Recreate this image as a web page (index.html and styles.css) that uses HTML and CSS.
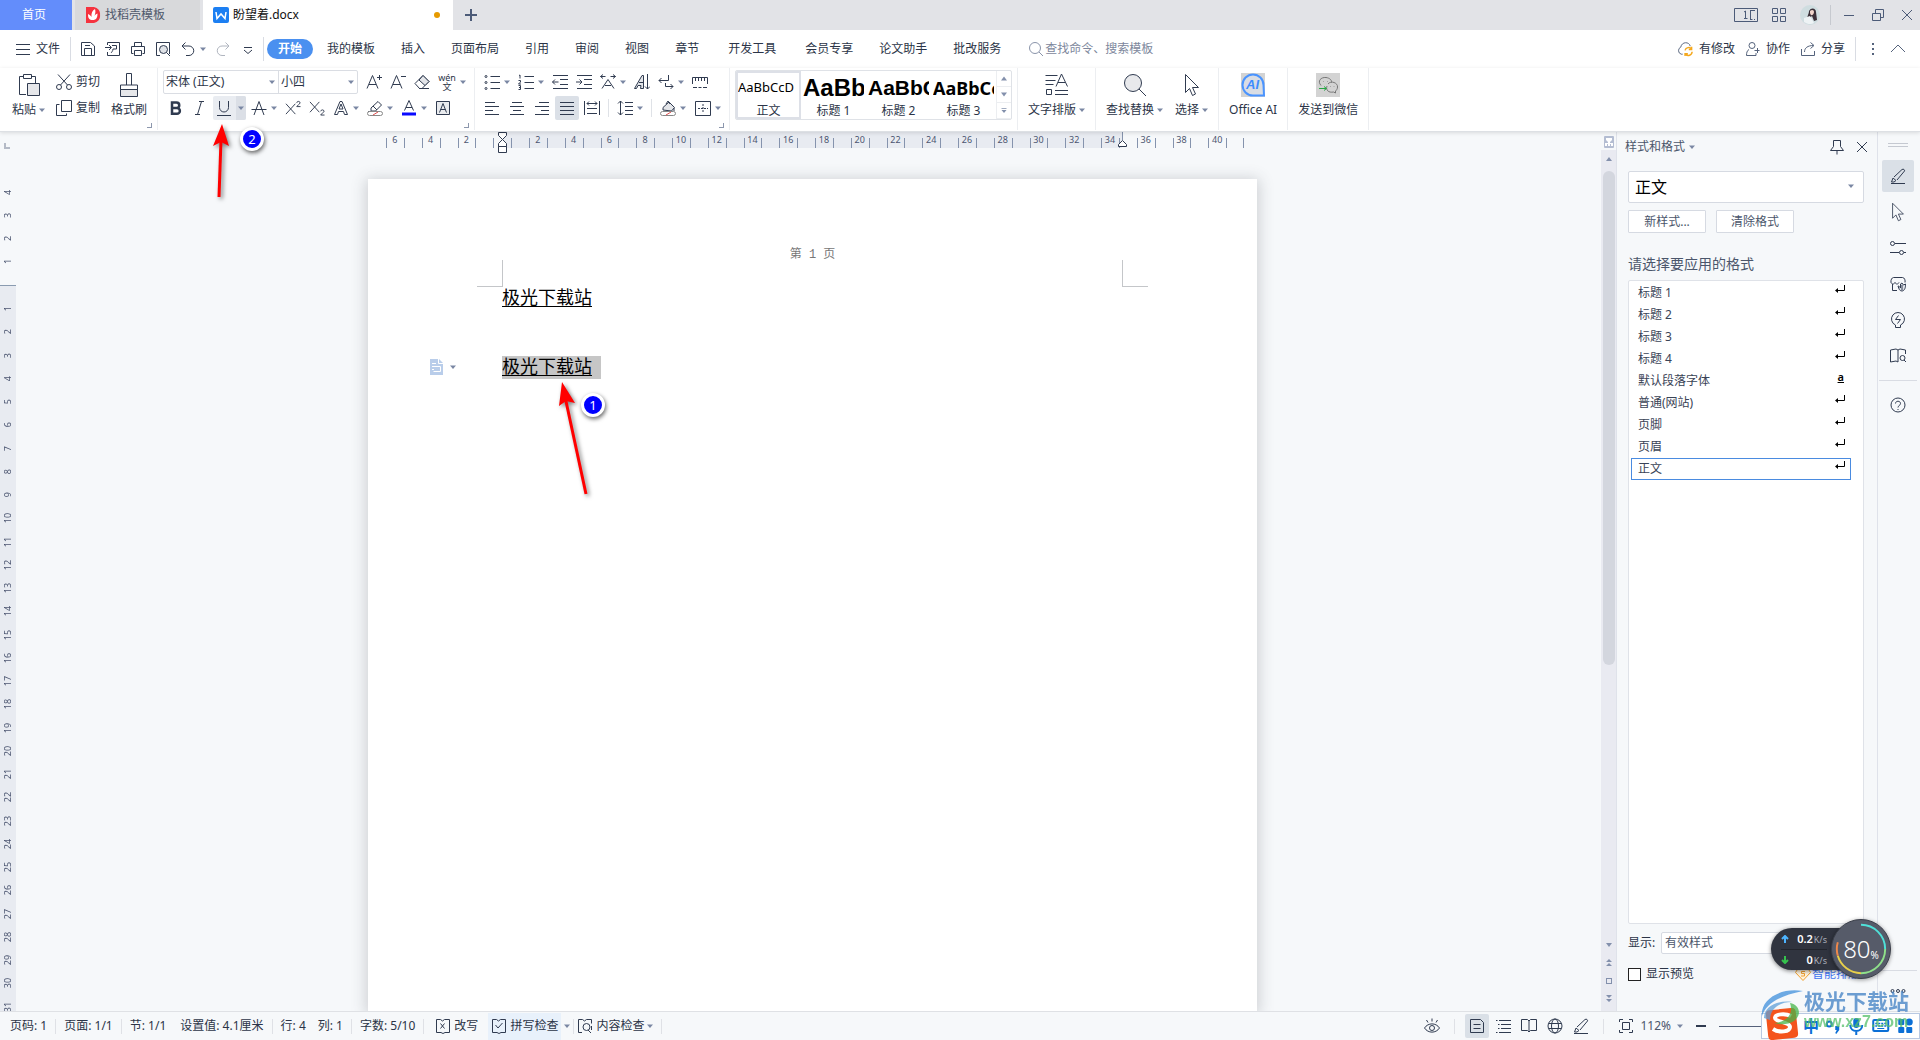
FILE: index.html
```html
<!DOCTYPE html>
<html lang="zh-CN">
<head>
<meta charset="utf-8">
<title>盼望着.docx</title>
<link rel="stylesheet" href="styles.css">
</head>
<body>
<svg class="sprite" aria-hidden="true">
  <symbol id="caret" viewBox="0 0 6 16"><path d="M0 6.500h6l-3 3.500z" fill="#7a87a3" stroke="none"/></symbol>
  <symbol id="menu" viewBox="0 0 16 16"><path d="M1 3.500h14M1 8.500h14M1 13.500h14"/></symbol>
  <symbol id="save" viewBox="0 0 16 16"><path d="M1.500 14.500v-13h9l4 3.500v9.500h-13M4.500 14v-6.500h7v6.500M5 4.500h5"/></symbol>
  <symbol id="export" viewBox="0 0 16 16"><path d="M2.500 4V1.500h12v13h-12V11M0 6.500h6M4 4l2.500 2.500L4 9M7 4.500h4.500v3.500h-3.500c0 2-2 4-2 4"/></symbol>
  <symbol id="print" viewBox="0 0 16 16"><path d="M4.500 5V1.500h7V5M3.500 12.500h-2v-7h13v7h-2M4.500 9.500h7v5h-7z"/></symbol>
  <symbol id="preview" viewBox="0 0 16 16"><path d="M5 14.500H1.500v-13h13V13"/><circle cx="8.500" cy="8.500" r="4" fill="#dfe2e7"/><path d="M11.500 11.500L15 15"/></symbol>
  <symbol id="undo" viewBox="0 0 16 16"><path d="M5.500 1.500L2 5l3.500 3.500M2 5h7a4.700 4.700 0 0 1 0 9.500H6"/></symbol>
  <symbol id="redo" viewBox="0 0 16 16"><path stroke="#b0b5bf" d="M10.500 1.500L14 5l-3.500 3.500M14 5H7a4.700 4.700 0 0 0 0 9.500h3"/></symbol>
  <symbol id="more" viewBox="0 0 16 16"><path d="M4 6.500h8M4 9l4 3.500L12 9"/></symbol>
  <symbol id="search" viewBox="0 0 16 16"><circle cx="7" cy="7" r="5.500"/><path d="M11 11l4 4"/></symbol>
  <symbol id="cloud" viewBox="0 0 18 16"><path stroke="#55637c" d="M6 13.500H4.500a4 4 0 0 1-.5-7.500c1-6 9-6 10-1"/><path stroke="#f5a81c" stroke-width="1.500" d="M8.500 9.500a4 4 0 0 1 7-1.500M16 11a4 4 0 0 1-7 2.500M15.500 5.500v3h-3M8.500 15.500v-2.500h3"/></symbol>
  <symbol id="people" viewBox="0 0 16 16"><circle cx="7" cy="4.500" r="3"/><path d="M4 8.500C2 9.500 1.500 12 1.500 14.500h9.500v-2.500M9.500 9.500h5M12.500 7v5"/></symbol>
  <symbol id="share" viewBox="0 0 16 16"><path d="M1.500 8v6.500h13V10M4.500 11c0-4 3-6.500 9-6.500M10.500 1.500l3.500 3-3.500 3"/></symbol>
  <symbol id="chevron" viewBox="0 0 16 16"><path d="M1 11l7-7 7 7"/></symbol>
  <symbol id="dots" viewBox="0 0 4 16"><path stroke-width="2" d="M2 2v2M2 7v2M2 12v2"/></symbol>
  <symbol id="paste" viewBox="0 0 24 24"><path d="M6.500 3.500h-4v18H9M14.500 3.500h4V10M6.500 1.500h8v4h-8z"/><path fill="#e6e7ea" d="M10.500 10.500h12v12h-12z"/></symbol>
  <symbol id="cut" viewBox="0 0 16 16"><circle cx="3" cy="13" r="2.500"/><circle cx="13" cy="13" r="2.500"/><path d="M2 0.500l9.500 10.500M14 0.500L4.500 11"/></symbol>
  <symbol id="copy" viewBox="0 0 16 16"><path d="M5.500 .5h10v11h-10zM3.500 4.500h-3v11h10v-2"/></symbol>
  <symbol id="brush" viewBox="0 0 24 24"><path d="M9.500 12V.5h5V12M3.500 17v-5h17v5"/><path fill="#e6e7ea" d="M3.500 16.500h17v7h-17z"/></symbol>
  <symbol id="aplus" viewBox="0 0 16 16"><path d="M1 14.500L6.500 1.500 12 14.500M3 10.500h7M11 3.500h5M13.500 1v5"/></symbol>
  <symbol id="aminus" viewBox="0 0 16 16"><path d="M1 14.500L6.500 1.500 12 14.500M3 10.500h7M11 2.500h5"/></symbol>
  <symbol id="eraser" viewBox="0 0 16 16"><path d="M1 9.500L9 1.500l6 6-7 7H5.500zM5 14.500h10"/><path fill="#e3e5e9" d="M5 6l4-4.500 6 6-4 4z"/></symbol>
  <symbol id="bold" viewBox="0 0 16 16"><path stroke-width="2.500" d="M4 2.500h4.500a2.700 2.700 0 0 1 0 5.500H4zM4 8h5a2.900 2.900 0 0 1 0 5.800H4z"/></symbol>
  <symbol id="italic" viewBox="0 0 16 16"><path d="M7 1.500h5M3 14.500h5M9.500 1.500l-4 13"/></symbol>
  <symbol id="under" viewBox="0 0 16 16"><path d="M3.500 1v6.500a4.500 4.500 0 0 0 9 0V1M1 15.500h14"/></symbol>
  <symbol id="strike" viewBox="0 0 16 16"><path d="M3 15L8 1.500 13 15M.5 9.500h15"/></symbol>
  <symbol id="sup" viewBox="0 0 17 16"><path d="M1 3.500l10 11M11 3.500l-10 11M12.500 2.500c0-2 3.500-2 3.500 0 0 1.500-3.500 3-3.500 4H16.500"/></symbol>
  <symbol id="sub" viewBox="0 0 17 16"><path d="M1 1.500l10 11M11 1.500l-10 11M12.500 11.500c0-2 3.500-2 3.500 0 0 1.500-3.500 2.500-3.500 4H16.500"/></symbol>
  <symbol id="aout" viewBox="0 0 16 16"><path d="M1.500 14.500L7 1.500h2l5.500 13h-3l-1-3h-5l-1 3zM6 9h4L8 4z"/></symbol>
  <symbol id="marker" viewBox="0 0 16 16"><path d="M4 10.500V8l7-6.500 3.500 3.500-6 6H4zM6 6l4 4M1 11.500h4"/><rect x=".5" y="11.500" width="15" height="4" rx="2" fill="#fff" stroke="#888"/><path d="M6 15l5-3" stroke="#e05050"/></symbol>
  <symbol id="acolor" viewBox="0 0 16 16"><path d="M3.500 10.500L8 .5l4.500 10M5 7.500h6"/><path stroke="#0a0aff" stroke-width="3" d="M1 14h14"/></symbol>
  <symbol id="abox" viewBox="0 0 16 16"><path fill="#e9ebee" d="M1.500 1.500h13v13h-13z"/><path d="M4.500 12.500L8 3.500l3.500 9M5.500 9.500h5"/></symbol>
  <symbol id="bullets" viewBox="0 0 16 16"><path d="M6.500 2.500H16M6.500 8.500H16M6.500 14.500H16"/><circle cx="2" cy="2.500" r="1"/><circle cx="2" cy="8.500" r="1"/><circle cx="2" cy="14.500" r="1"/></symbol>
  <symbol id="numbers" viewBox="0 0 16 16"><path d="M6.500 2.500H16M6.500 8.500H16M6.500 14.500H16M1 1.500l1-.5v3.500M.5 6.500h2v1.500L.5 10h2.500M.5 11.500h2v4h-2M1 13.500h1.500"/></symbol>
  <symbol id="outdent" viewBox="0 0 16 16"><path d="M1 1.500h15M8 5.500h8M8 10.500h8M1 14.500h15M.5 8h6M3 5.500L.5 8 3 10.500"/></symbol>
  <symbol id="indent" viewBox="0 0 16 16"><path d="M1 1.500h15M8 5.500h8M8 10.500h8M1 14.500h15M0 8h6M3.500 5.500L6 8l-2.500 2.500"/></symbol>
  <symbol id="scale" viewBox="0 0 16 16"><path d="M.5 2.500h5M3 .5l-2.500 2 2.500 2M10.500 2.500h5M13 .5l2.500 2-2.500 2M2 14.500L8 5.500l6 9M5 11.500h6"/></symbol>
  <symbol id="sort" viewBox="0 0 16 16"><path d="M13.500 0v15M11 12.500l2.500 2.500 2.500-2.500"/><path fill="#e3e5e9" d="M.5 14.500L8 1.500h1.500v13h-3l.5-3H4l-1.500 3zM5 8.500h4"/></symbol>
  <symbol id="wrap" viewBox="0 0 16 16"><path d="M10.500 1v5.500H1M3.500 4L1 6.500 3.500 9M7.500 9v3.500H15M12.500 10l2.500 2.500-2.500 2.500"/></symbol>
  <symbol id="rule" viewBox="0 0 16 16"><path d="M.5 10V3.500h15V10M3.500 4v3M6.500 4v3M9.500 4v3M12.500 4v3M1 13.500h4M11 13.500h4M6.500 13.500h3"/></symbol>
  <symbol id="al" viewBox="0 0 16 16"><path d="M1 2.500h10M1 6.500h14M1 10.500h8M1 14.500h14"/></symbol>
  <symbol id="ac" viewBox="0 0 16 16"><path d="M3 2.500h10M1 6.500h14M4 10.500h8M1 14.500h14"/></symbol>
  <symbol id="ar" viewBox="0 0 16 16"><path d="M5 2.500h10M1 6.500h14M7 10.500h8M1 14.500h14"/></symbol>
  <symbol id="aj" viewBox="0 0 16 16"><path d="M1 2.500h14M1 6.500h14M1 10.500h14M1 14.500h14"/></symbol>
  <symbol id="dist" viewBox="0 0 16 16"><path d="M.5 1v14M15.500 1v14M3 3.500h10M5 1.500l-2 2 2 2M11 1.500l2 2-2 2M3 8.500h10M3 13.500h10"/></symbol>
  <symbol id="spacing" viewBox="0 0 16 16"><path d="M3.500 1v14M1 3.500L3.500 1 6 3.500M1 12.500L3.500 15 6 12.500M8 2.500h8M8 6.500h8M8 10.500h8M8 14.500h8"/></symbol>
  <symbol id="fill" viewBox="0 0 16 16"><path fill="#e3e5e9" d="M3 10V7.500L9 2l5.500 5.500-3 3.500z"/><path d="M6 4l2-3 2 3M14 8v3"/><rect x=".5" y="11.500" width="15" height="4" rx="2" fill="#fff" stroke="#888"/><path d="M6 15l5-3" stroke="#e05050"/></symbol>
  <symbol id="grid" viewBox="0 0 16 16"><path d="M.5 1.500h15v14H.5z"/><path stroke-dasharray="2 1" d="M3 8.500h10M8 4v9"/></symbol>
  <symbol id="layout" viewBox="0 0 24 24"><path d="M.5 2.500h12M.5 7.500h10M.5 11.500h8M11 13.500l5.500-12.500 6 12.500M13 9.500h7M1.500 16.500h5v5h-5zM10 17.500h13M10 21.500h13"/></symbol>
  <symbol id="find" viewBox="0 0 24 24"><circle cx="10" cy="10" r="8.500" fill="#e8e9ec"/><path d="M16 16l7 7"/></symbol>
  <symbol id="pointer" viewBox="0 0 24 24"><path d="M5.500 1.500v18l4-4 3 7 3-1.500-3-6.500h6z"/></symbol>
  <symbol id="ai" viewBox="0 0 24 24"><path fill="#d3d3d3" stroke="none" d="M0 0h24v24H0z"/><path fill="#d9dde4" stroke="#4a94ff" stroke-width="2" d="M23 22.500H12A10.500 10.500 0 1 1 22.500 12z"/></symbol>
  <symbol id="wechat" viewBox="0 0 24 24"><path fill="#d3d3d3" stroke="none" d="M0 0h24v24H0z"/><g stroke="#777"><path d="M5 12.500C1 8 5 4 10 4.500c4 .5 6 3 5.500 5"/><path d="M12 11c3-4 10-1 9.500 3 0 2-1 3-2 4v2l-2-1c-5 1-8-2-6.500-6"/><path d="M7.500 8.500v.5M11.500 8v.5M14.500 13v.5M18 13v.5"/></g><path stroke="#28a745" d="M3 15.500h7M8 13.500l2.500 2L8 17.500"/></symbol>
  <symbol id="pin" viewBox="0 0 16 16"><path d="M4.500 1.500h7v6l3 4h-13l3-4zM8 11.500v4"/></symbol>
  <symbol id="close" viewBox="0 0 16 16"><path d="M3 3l10 10M13 3L3 13"/></symbol>
  <symbol id="pen" viewBox="0 0 16 16"><path d="M1 15.500h14M1.500 14l1.500-4 3 2.500-2 1.500zM4 9l8-7.500c1.500-1 3 .5 2.500 1.500L7 12"/></symbol>
  <symbol id="tune" viewBox="0 0 16 16"><circle cx="2.500" cy="3.500" r="2"/><path d="M5 3.500h11M0 12.500h9M14 12.500h2"/><circle cx="11.500" cy="12.500" r="2"/></symbol>
  <symbol id="shop" viewBox="0 0 16 16"><path d="M2.500 8v6.500H7M1 6.500C.5 4 2 1.500 3.500 1.500h9c2 0 3 3 2.500 5M1 6.500c1 2 3 2 4 0 1 2 3 2 4 0"/><path fill="#dfe3ea" d="M8 10c1 0 2 1 2.500 2V8l1.500-1 1.500 2L15.500 8c.5 3-1 7-3.500 7s-3-2-4-5zM12 9v5"/></symbol>
  <symbol id="bulb" viewBox="0 0 16 16"><path d="M5.500 13A6.500 6.500 0 1 1 10.500 13v2.500h-5zM8.500 3.500l-3 4h5l-3 4"/></symbol>
  <symbol id="book" viewBox="0 0 16 16"><path d="M8 14l-1.500-1.500H.5v-11H6.500L8 3l1.500-1.500h6v11h-6zM8 3v11"/></symbol>
  <symbol id="bookq" viewBox="0 0 16 16"><path d="M8 14l-2-1-5.500 1v-12L6 1l2 1 2-1 5.500 1v4M8 2v12"/><circle cx="12.500" cy="10" r="2.500"/><path d="M14 12l2 2"/></symbol>
  <symbol id="help" viewBox="0 0 16 16"><circle cx="8" cy="8" r="7"/><path d="M5.500 6.500c0-3 5-3 5 0 0 2-2.500 2-2.500 4M8 12v1"/></symbol>
  <symbol id="edit" viewBox="0 0 16 16"><path d="M6 14.500H1.500v-13h4l2 1.500 2-1.500h5v13H10l-2 1zM5.500 5.500l4 5M9.500 5.500l-4 5"/></symbol>
  <symbol id="spell" viewBox="0 0 16 16"><path d="M6 14.500H1.500v-13h4l2 1.500 2-1.500h5v13H10l-2 1zM4.500 7l2.500 3 4.500-5"/></symbol>
  <symbol id="inspect" viewBox="0 0 16 16"><path d="M5 14.500H1.500v-13h4l2 1.500 2-1.500h5v4M14.500 12v-4"/><circle cx="9.500" cy="9" r="3.500"/><path d="M11 12l3 3"/></symbol>
  <symbol id="eye" viewBox="0 0 16 16"><path d="M.5 10c3.500-5.500 11.500-5.500 15 0-3.500 5.500-11.500 5.500-15 0zM8 .5v3M2.500 2l1.500 2.500M13.500 2L12 4.500"/><circle cx="8" cy="10" r="2.500"/></symbol>
  <symbol id="page" viewBox="0 0 16 16"><path d="M1.500 1.500h10l3 3v10h-13zM4.500 6.500h7M4.500 10.500h7"/></symbol>
  <symbol id="outline" viewBox="0 0 16 16"><path d="M4 2.500h12M6 6.500h10M6 10.500h10M4 14.500h12M1 2.500h1.500M3 6.500h1.500M3 10.500h1.500M1 14.500h1.500"/></symbol>
  <symbol id="globe" viewBox="0 0 16 16"><circle cx="8" cy="8" r="7"/><ellipse cx="8" cy="8" rx="3.500" ry="7"/><path d="M1.500 5.500h13M1.500 10.500h13"/></symbol>
  <symbol id="fit" viewBox="0 0 16 16"><path d="M1.500 4V1.500H5M11 1.500h3.500V4M14.500 12v2.500H11M5 14.500H1.500V12M4.500 4.500h7v7h-7z"/></symbol>
  <symbol id="ret" viewBox="0 0 10 8"><path stroke="#000" d="M9.500 0v5.500H1"/><path fill="#000" stroke="none" d="M0 5.500l3-2.500v5z"/></symbol>
</svg>

<header class="titlebar">
  <button class="tab home">首页</button>
  <button class="tab shell"><svg class="i" viewBox="0 0 16 16"><path fill="#f5333f" stroke="none" d="M1 0h8a7 7 0 0 1 6 8 7 7 0 0 1-6 8H1z"/><path fill="#fff" stroke="none" d="M8 13c-4 0-5-2-5-6 2 1 3 2 3.500 3C6 6 7.500 3.500 10 2c1 3 0 5-.5 7 .5-1 1.500-2 3-2.500C12.500 11 11 13 8 13z"/></svg>找稻壳模板</button>
  <button class="tab doc"><svg class="i" viewBox="0 0 16 16"><rect width="16" height="16" rx="2" fill="#1c7ff2" stroke="none"/><path stroke="#fff" stroke-width="1.500" d="M3 5l1 6.500L8 7l4 4.500L13 5"/></svg><span>盼望着.docx</span><i class="unsaved"></i></button>
  <button class="plus" aria-label="新建"><svg class="i" viewBox="0 0 16 16"><path stroke-width="2" d="M2 8h12M8 2v12"/></svg></button>
  <div class="win">
    <svg width="24" height="16" viewBox="0 0 24 16"><path d="M.5 1.500h23v13H.5zM16.500 3v10M16.500 3.500h4.500M16.500 12.500h2M20 12.500h1M10 5l1.500-1v7M10 11.500h3.500"/></svg>
    <svg width="16" height="16" viewBox="0 0 16 16"><path d="M1.500 1.500h5v5h-5zM9.500 1.500h5v5h-5zM1.500 9.500h5v5h-5zM9.500 9.500h5v5h-5z"/></svg>
    <svg width="20" height="20" viewBox="0 0 20 20"><circle cx="10" cy="10" r="10" fill="#cfdde0" stroke="none"/><path fill="#3a3038" stroke="none" d="M9 6c2-4 7-3 7 1l1 8-3 1-2-5-4 3c-2-1 1-5 1-8z"/><path fill="#f0d5cb" stroke="none" d="M10 6c2-2 4-1 4 1s-2 4-3 3-1-2-1-4z"/><path fill="#eef3f5" stroke="none" d="M4 13l6-2 4 7c-3 2-7 1-10-1z"/></svg>
    <i class="vr"></i>
    <button aria-label="最小化"><svg class="i" viewBox="0 0 16 16"><path d="M3 8.500h10"/></svg></button>
    <button aria-label="还原"><svg class="i" viewBox="0 0 16 16"><path d="M2.500 6.500h8v7h-8zM5.500 6V2.500h8v8H11"/></svg></button>
    <button aria-label="关闭"><svg class="i"><use href="#close"/></svg></button>
  </div>
</header>

<nav class="menubar">
  <button class="file"><svg class="i"><use href="#menu"/></svg>文件</button>
  <i class="vr"></i>
  <div class="quick">
    <button aria-label="保存"><svg class="i"><use href="#save"/></svg></button>
    <button aria-label="输出"><svg class="i"><use href="#export"/></svg></button>
    <button aria-label="打印"><svg class="i"><use href="#print"/></svg></button>
    <button aria-label="预览"><svg class="i"><use href="#preview"/></svg></button>
    <button class="dd" aria-label="撤销"><svg class="i"><use href="#undo"/></svg><svg class="c"><use href="#caret"/></svg></button>
    <button aria-label="恢复"><svg class="i"><use href="#redo"/></svg></button>
    <button aria-label="更多"><svg class="i"><use href="#more"/></svg></button>
  </div>
  <i class="vr"></i>
  <div class="tabs">
    <button class="on">开始</button><button>我的模板</button><button>插入</button><button>页面布局</button><button>引用</button><button>审阅</button><button>视图</button><button>章节</button><button class="wide">开发工具</button><button class="wide">会员专享</button><button>论文助手</button><button>批改服务</button>
  </div>
  <label class="search"><svg class="i"><use href="#search"/></svg><input type="text" placeholder="查找命令、搜索模板"></label>
  <div class="collab">
    <button><svg class="i cloud"><use href="#cloud"/></svg>有修改</button>
    <button><svg class="i"><use href="#people"/></svg>协作</button>
    <button><svg class="i"><use href="#share"/></svg>分享</button>
    <i class="vr"></i>
    <button aria-label="菜单"><svg class="dots"><use href="#dots"/></svg></button>
    <button aria-label="折叠"><svg class="i"><use href="#chevron"/></svg></button>
  </div>
</nav>

<section class="ribbon">
  <div class="group clip">
    <button class="big"><svg class="l"><use href="#paste"/></svg><span>粘贴<svg class="c"><use href="#caret"/></svg></span></button>
    <div class="stack">
      <button><svg class="i"><use href="#cut"/></svg>剪切</button>
      <button><svg class="i"><use href="#copy"/></svg>复制</button>
    </div>
    <button class="big"><svg class="l"><use href="#brush"/></svg><span>格式刷</span></button>
    <i class="corner"></i>
  </div>
  <div class="group font">
    <div class="row">
      <div class="selects">
        <span class="sel face"><select aria-label="字体"><option>宋体 (正文)</option></select><svg class="c"><use href="#caret"/></svg></span>
        <span class="sel size"><select aria-label="字号"><option>小四</option></select><svg class="c"><use href="#caret"/></svg></span>
      </div>
      <button aria-label="增大"><svg class="i"><use href="#aplus"/></svg></button>
      <button aria-label="减小"><svg class="i"><use href="#aminus"/></svg></button>
      <button aria-label="清除"><svg class="i"><use href="#eraser"/></svg></button>
      <button class="dd"><span class="pinyin"><b>wén</b><b>文</b></span><svg class="c"><use href="#caret"/></svg></button>
    </div>
    <div class="row low">
      <button aria-label="加粗"><svg class="i"><use href="#bold"/></svg></button>
      <button aria-label="倾斜"><svg class="i"><use href="#italic"/></svg></button>
      <button class="ul" aria-label="下划线"><svg class="i"><use href="#under"/></svg><span><svg class="c"><use href="#caret"/></svg></span></button>
      <button class="dd" aria-label="删除线"><svg class="i"><use href="#strike"/></svg><svg class="c"><use href="#caret"/></svg></button>
      <button aria-label="上标"><svg class="i"><use href="#sup"/></svg></button>
      <button aria-label="下标"><svg class="i"><use href="#sub"/></svg></button>
      <button class="dd" aria-label="文字效果"><svg class="i"><use href="#aout"/></svg><svg class="c"><use href="#caret"/></svg></button>
      <button class="dd" aria-label="突出显示"><svg class="i"><use href="#marker"/></svg><svg class="c"><use href="#caret"/></svg></button>
      <button class="dd" aria-label="字体颜色"><svg class="i"><use href="#acolor"/></svg><svg class="c"><use href="#caret"/></svg></button>
      <button aria-label="字符底纹"><svg class="i"><use href="#abox"/></svg></button>
    </div>
    <i class="corner"></i>
  </div>
  <div class="group para">
    <div class="row">
      <button class="dd" aria-label="项目符号"><svg class="i"><use href="#bullets"/></svg><svg class="c"><use href="#caret"/></svg></button>
      <button class="dd" aria-label="编号"><svg class="i"><use href="#numbers"/></svg><svg class="c"><use href="#caret"/></svg></button>
      <button aria-label="减少缩进"><svg class="i"><use href="#outdent"/></svg></button>
      <button aria-label="增加缩进"><svg class="i"><use href="#indent"/></svg></button>
      <button class="dd" aria-label="中文版式"><svg class="i"><use href="#scale"/></svg><svg class="c"><use href="#caret"/></svg></button>
      <button aria-label="排序"><svg class="i"><use href="#sort"/></svg></button>
      <button class="dd" aria-label="换行"><svg class="i"><use href="#wrap"/></svg><svg class="c"><use href="#caret"/></svg></button>
      <button aria-label="标尺"><svg class="i"><use href="#rule"/></svg></button>
    </div>
    <div class="row low">
      <button aria-label="左对齐"><svg class="i"><use href="#al"/></svg></button>
      <button aria-label="居中"><svg class="i"><use href="#ac"/></svg></button>
      <button aria-label="右对齐"><svg class="i"><use href="#ar"/></svg></button>
      <button class="pressed" aria-label="两端对齐"><svg class="i"><use href="#aj"/></svg></button>
      <button aria-label="分散对齐"><svg class="i"><use href="#dist"/></svg></button>
      <i class="sep"></i>
      <button class="dd" aria-label="行距"><svg class="i"><use href="#spacing"/></svg><svg class="c"><use href="#caret"/></svg></button>
      <i class="sep"></i>
      <button class="dd" aria-label="底纹"><svg class="i"><use href="#fill"/></svg><svg class="c"><use href="#caret"/></svg></button>
      <button class="dd" aria-label="边框"><svg class="i"><use href="#grid"/></svg><svg class="c"><use href="#caret"/></svg></button>
    </div>
    <i class="corner"></i>
  </div>
  <div class="group styles">
    <div class="gallery">
      <button class="on"><span class="s0">AaBbCcD</span>正文</button>
      <button><span class="s1">AaBb</span>标题 1</button>
      <button><span class="s2">AaBbC</span>标题 2</button>
      <button><span class="s3">AaBbCc</span>标题 3</button>
      <div class="spin"><span><svg viewBox="0 0 6 4"><path d="M0 4h6L3 0z"/></svg></span><span><svg viewBox="0 0 6 4"><path d="M0 0h6L3 4z"/></svg></span><span><svg viewBox="0 0 6 6"><path d="M0 0h6v1H0zM0 2.500h6L3 6z"/></svg></span></div>
    </div>
  </div>
  <div class="group solo"><button class="big"><svg class="l"><use href="#layout"/></svg><span>文字排版<svg class="c"><use href="#caret"/></svg></span></button></div>
  <div class="group solo"><button class="big"><svg class="l"><use href="#find"/></svg><span>查找替换<svg class="c"><use href="#caret"/></svg></span></button><button class="big"><svg class="l"><use href="#pointer"/></svg><span>选择<svg class="c"><use href="#caret"/></svg></span></button></div>
  <div class="group solo"><button class="big"><span class="ailogo"><svg class="l"><use href="#ai"/></svg><b>AI</b></span><span>Office AI</span></button></div>
  <div class="group solo"><button class="big"><svg class="l"><use href="#wechat"/></svg><span>发送到微信</span></button></div>
</section>

<main class="work">
  <aside class="vruler">
    <i class="stop"></i>
    <div class="above"><b>4</b><b>3</b><b>2</b><b>1</b></div>
    <div class="below"><div><b>1</b><b>2</b><b>3</b><b>4</b><b>5</b><b>6</b><b>7</b><b>8</b><b>9</b><b>10</b><b>11</b><b>12</b><b>13</b><b>14</b><b>15</b><b>16</b><b>17</b><b>18</b><b>19</b><b>20</b><b>21</b><b>22</b><b>23</b><b>24</b><b>25</b><b>26</b><b>27</b><b>28</b><b>29</b><b>30</b><b>31</b></div></div>
  </aside>
  <div class="canvas">
    <div class="hruler">
      <div class="ticks"><b>6</b><b></b><b>4</b><b></b><b>2</b><b></b><b></b><b></b><b>2</b><b></b><b>4</b><b></b><b>6</b><b></b><b>8</b><b></b><b>10</b><b></b><b>12</b><b></b><b>14</b><b></b><b>16</b><b></b><b>18</b><b></b><b>20</b><b></b><b>22</b><b></b><b>24</b><b></b><b>26</b><b></b><b>28</b><b></b><b>30</b><b></b><b>32</b><b></b><b>34</b><b></b><b>36</b><b></b><b>38</b><b></b><b>40</b><b></b></div>
      <svg class="mark left" viewBox="0 0 10 22"><path fill="#fff" d="M.5 .5h8v3l-4 4-4-4zM.5 14.500v-3l4-4 4 4v3zM.5 14.500h8v6h-8z"/></svg>
      <svg class="mark right" viewBox="0 0 10 22"><path fill="#fff" d="M.5 14.500v-2l4-4 4 4v2z"/><path stroke="#8593ad" d="M4.500 0v8"/></svg>
    </div>
    <article class="page">
      <p class="pagehead">第 1 页</p>
      <div class="crops"><i class="tl"></i><i class="tr"></i></div>
      <div class="text">
        <p><u>极光下载站</u></p>
        <p>&nbsp;</p>
        <p>&nbsp;</p>
        <p><span class="picked"><u>极光下载站</u></span></p>
      </div>
      <div class="pastetip"><svg width="13" height="16" viewBox="0 0 13 16"><path fill="#b9cdea" stroke="none" d="M0 0h9l4 4v12H0z"/><path stroke="#fff" d="M2 4.500h4M2 7.500h4M2 10.500h2M5.500 7.500h5v5h-7M8.500 0v4.500H13"/></svg><svg class="c"><use href="#caret"/></svg></div>
    </article>
  </div>
  <div class="scroll">
    <svg class="top" viewBox="0 0 10 12"><rect width="10" height="12" rx="1" fill="#b4bdd2" stroke="none"/><path fill="#fff" stroke="none" d="M2 2h6v2L6 6v1h3v3H7V8H6v2H4V8H3v2H1V7h3V6L2 4z"/></svg>
    <div class="track">
      <svg class="a" viewBox="0 0 6 4"><path d="M0 4h6L3 0z"/></svg>
      <div class="rail"><div class="thumb"></div></div>
      <svg class="a" viewBox="0 0 6 4"><path d="M0 0h6L3 4z"/></svg>
      <svg class="b" viewBox="0 0 6 8"><path d="M0 3h6L3 0zM0 7h6L3 4z"/></svg>
      <svg class="b" viewBox="0 0 6 8"><path d="M0 1h6v6H0zM1 2v4h4V2z" fill-rule="evenodd"/></svg>
      <svg class="b" viewBox="0 0 6 8"><path d="M0 0h6L3 3zM0 4h6L3 7z"/></svg>
    </div>
  </div>
  <aside class="panel">
    <header><button>样式和格式<svg class="c"><use href="#caret"/></svg></button><span><button aria-label="固定"><svg class="i"><use href="#pin"/></svg></button><button aria-label="关闭"><svg class="i"><use href="#close"/></svg></button></span></header>
    <span class="sel current"><select aria-label="当前样式"><option>正文</option></select><svg class="c"><use href="#caret"/></svg></span>
    <div class="acts"><button>新样式...</button><button>清除格式</button></div>
    <h2>请选择要应用的格式</h2>
    <ul class="list">
      <li>标题 1<svg><use href="#ret"/></svg></li>
      <li>标题 2<svg><use href="#ret"/></svg></li>
      <li>标题 3<svg><use href="#ret"/></svg></li>
      <li>标题 4<svg><use href="#ret"/></svg></li>
      <li>默认段落字体<u>a</u></li>
      <li>普通(网站)<svg><use href="#ret"/></svg></li>
      <li>页脚<svg><use href="#ret"/></svg></li>
      <li>页眉<svg><use href="#ret"/></svg></li>
      <li class="on">正文<svg><use href="#ret"/></svg></li>
    </ul>
    <div class="show"><label for="show">显示:</label><span class="sel"><select id="show"><option>有效样式</option></select><svg class="c"><use href="#caret"/></svg></span></div>
    <div class="show"><label class="chk"><input type="checkbox">显示预览</label><a href="#"><svg class="i" viewBox="0 0 16 16"><path stroke="#f0a030" fill="#fff3dc" d="M3 2.500h10l2.500 4L8 14.500.5 6.500z"/><path stroke="#f0a030" d="M10 5.500H6.500v2h3v2.500H6"/></svg>智能排版</a></div>
  </aside>
  <aside class="tools">
    <i class="grip"></i>
    <button class="on" aria-label="样式"><svg class="i"><use href="#pen"/></svg></button>
    <button aria-label="选择"><svg class="l"><use href="#pointer"/></svg></button>
    <button aria-label="属性"><svg class="i"><use href="#tune"/></svg></button>
    <button aria-label="素材"><svg class="i"><use href="#shop"/></svg></button>
    <button aria-label="推荐"><svg class="i"><use href="#bulb"/></svg></button>
    <button aria-label="查阅"><svg class="i"><use href="#bookq"/></svg></button>
    <i class="hr"></i>
    <button aria-label="帮助"><svg class="i"><use href="#help"/></svg></button>
    <i class="hr end"></i>
    <button aria-label="更多"><svg class="i" viewBox="0 0 16 16"><circle cx="2.500" cy="8" r="1.500"/><circle cx="8" cy="8" r="1.500"/><circle cx="13.500" cy="8" r="1.500"/></svg></button>
  </aside>
</main>

<footer class="status">
  <span>页码: 1</span><i></i><span>页面: 1/1</span><i></i><span>节: 1/1</span><span>设置值: 4.1厘米</span><i></i><span class="tight">行: 4</span><span>列: 1</span><i></i><span>字数: 5/10</span><i></i>
  <button class="over"><svg class="i"><use href="#edit"/></svg>改写</button>
  <button><em><svg class="i"><use href="#spell"/></svg>拼写检查</em><svg class="c"><use href="#caret"/></svg></button><i class="near"></i>
  <button><svg class="i"><use href="#inspect"/></svg>内容检查<svg class="c gap"><use href="#caret"/></svg></button><i></i>
  <div class="views">
    <button aria-label="护眼"><svg class="i"><use href="#eye"/></svg></button><i></i>
    <button class="on" aria-label="页面"><svg class="i"><use href="#page"/></svg></button>
    <button aria-label="大纲"><svg class="i"><use href="#outline"/></svg></button>
    <button aria-label="阅读"><svg class="i"><use href="#book"/></svg></button>
    <button aria-label="网页"><svg class="i"><use href="#globe"/></svg></button>
    <button aria-label="写作"><svg class="i"><use href="#pen"/></svg></button><i></i>
    <button class="zoom"><svg class="i"><use href="#fit"/></svg><span>112%</span><svg class="c"><use href="#caret"/></svg></button>
    <button aria-label="缩小"><svg class="i" viewBox="0 0 16 16"><path stroke-width="2" d="M3 8h10"/></svg></button>
    <input type="range" aria-label="缩放" min="10" max="500" value="500">
  </div>
</footer>

<svg class="arrow up1" viewBox="0 0 60 130"><path stroke="#f00" stroke-width="3" d="M13.500 21L34 116"/><path fill="#f00" stroke="none" d="M10 4l13 21-9-2-7 5z"/></svg>
<svg class="arrow up2" viewBox="0 0 30 80"><path stroke="#f00" stroke-width="3" d="M11 18L9 75"/><path fill="#f00" stroke="none" d="M12 2l7 22-8-4-8 4z"/></svg>
<span class="badge b1">1</span>
<span class="badge b2">2</span>

<div class="net">
  <div class="pill"><span><svg viewBox="0 0 8 8"><path stroke="#4db4ff" stroke-width="2" d="M4 8V1M1 4l3-3 3 3"/></svg><b>0.2</b><small>K/s</small></span><span><svg viewBox="0 0 8 8"><path stroke="#35c24d" stroke-width="2" d="M4 0v7M1 4l3 3 3-3"/></svg><b>0</b><small>K/s</small></span></div>
  <div class="dial"><svg viewBox="0 0 60 60"><path stroke="#4fe0d8" stroke-width="2" d="M30 5A25 25 0 0 1 55 30"/><path stroke="#8fe08a" stroke-width="2" d="M55 30A25 25 0 0 1 30 55"/><path stroke="#e8cf4a" stroke-width="2" d="M30 55A25 25 0 0 1 6 37"/><path stroke="#f0884a" stroke-width="2" d="M6 37A25 25 0 0 1 6 23"/></svg><b>80</b><small>%</small></div>
</div>

<div class="ime">
  <svg class="sogou" viewBox="0 0 36 32"><rect x="3" y="1" width="30" height="30" rx="4" transform="rotate(-6 18 16)" fill="#f4541d" stroke="none"/><path stroke="#fff" stroke-width="4" d="M27 8c-6-3-16-2-16 2s15 4 15 9-11 6-17 2"/></svg>
  <b>中</b>
  <svg class="l" viewBox="0 0 24 24"><path fill="#0b6fd6" stroke="none" d="M16 12h4v4l-3 4-1-1 1.500-3H16z"/><circle cx="10" cy="10" r="2.500" stroke="#0b6fd6" stroke-width="2"/></svg>
  <svg class="l" viewBox="0 0 24 24"><rect x="9" y="4" width="6" height="10" rx="3" fill="#0b6fd6" stroke="none"/><path stroke="#0b6fd6" stroke-width="2" d="M6 11c0 8 12 8 12 0M12 17v4"/></svg>
  <svg class="l" viewBox="0 0 24 24"><rect x="5" y="6" width="15" height="11" rx="1" stroke="#0b6fd6" stroke-width="2"/><path stroke="#0b6fd6" stroke-width="1.500" stroke-dasharray="2 1" d="M7 9.500h11M7 12h11"/><path stroke="#0b6fd6" d="M9 14.500h7"/></svg>
  <svg class="l" viewBox="0 0 24 24"><g fill="#0b6fd6" stroke="none"><rect x="5" y="5" width="6" height="6" rx="1"/><circle cx="16" cy="8" r="3.500"/><rect x="5" y="13" width="6" height="6" rx="1"/><rect x="13" y="13" width="6" height="6" rx="1"/></g></svg>
</div>
<div class="wm">
  <svg viewBox="0 0 44 44"><path fill="#3f8fdc" stroke="none" d="M43 3C20-1 0 12 2 28c4-12 16-20 41-25z"/><path fill="#5f9fd8" stroke="none" d="M4 30C4 18 18 12 32 14 20 14 10 20 10 32z"/><path fill="#46b54a" stroke="none" d="M30 15c10 2 12 12 4 18-6 4-14 4-20 2 12-1 20-8 16-20z"/></svg>
  <p>极光下载站<span>www.xz7.com</span></p>
</div>
</body>
</html>
```
FILE: styles.css
```css
* { box-sizing: border-box; }
body { margin: 0; height: 100vh; overflow: hidden; display: flex; flex-direction: column; background: #f6f8fa; color: #2b3447; font: 12px/16px "Noto Sans", "Noto Sans CJK SC", sans-serif; }
p, h2, ul { margin: 0; padding: 0; list-style: none; font-weight: 400; }
button, input, select { font: inherit; color: inherit; border: 0; background: none; padding: 0; margin: 0; white-space: nowrap; }
button { display: flex; align-items: center; justify-content: center; flex: none; }
select { appearance: none; width: 100%; height: 100%; }
svg { display: block; flex: none; fill: none; stroke: #303b50; }
.sprite { width: 0; height: 0; position: absolute; }
.i { width: 16px; height: 16px; }
.l { width: 24px; height: 24px; }
.c { width: 6px; height: 16px; }
.vr { width: 1px; background: #d9dce3; flex: none; }

.titlebar { display: flex; height: 30px; background: #e2e3e7; flex: none; }
.tab { height: 30px; }
.home { width: 72px; background: #638dfb; color: #fff; margin-right: 3px; padding-right: 4px; }
.shell { width: 125px; background: #d8d9db; color: #4f586b; justify-content: flex-start; padding-left: 10px; gap: 4px; margin-right: 3px; }
.doc { width: 250px; background: #fff; color: #111; justify-content: flex-start; padding: 0 13px 0 10px; gap: 4px; }
.doc span { flex: 1; text-align: left; }
.unsaved { width: 6px; height: 6px; border-radius: 3px; background: #e69a00; }
.plus { width: 36px; }
.plus svg, .win svg { stroke: #4c5b78; }
.win { margin-left: auto; display: flex; align-items: center; padding-right: 5px; gap: 13px; }
.win .vr { height: 20px; background: #c6c9cf; margin: 0 -3px; }

.menubar { display: flex; align-items: center; height: 38px; background: #fff; flex: none; padding: 0 14px 0 15px; }
.menubar .vr { height: 24px; }
.file { gap: 5px; margin-right: 10px; }
.quick { display: flex; gap: 9px; padding: 0 7px 0 9px; }
.dd { gap: 4px; }
.tabs { display: flex; gap: 26px; padding-left: 3px; }
.tabs .on { background: #4a90f0; color: #fff; border-radius: 10px; height: 20px; padding: 0 11px; margin-right: -12px; font-weight: 700; }
.tabs button { height: 20px; }
.tabs .wide { margin-left: 3px; }
.search { display: flex; align-items: center; gap: 1px; margin-left: 27px; flex: 1; }
.search svg { stroke: #8a94aa; }
.search input { width: 140px; outline: 0; }
.search input::placeholder { color: #7d879c; opacity: 1; }
.collab { display: flex; align-items: center; gap: 10px; }
.collab button { gap: 5px; }
.collab svg { stroke: #55637c; }
.collab button:last-child { margin-left: 5px; }
.collab .vr + button { margin-left: 5px; }
.cloud { width: 17px; }
.dots { width: 4px; height: 16px; }

.ribbon { display: flex; height: 64px; background: #fff; border-bottom: 1px solid #dde0e4; box-shadow: 0 1px 4px rgba(0,0,0,.12); flex: none; position: relative; z-index: 2; }
.group { position: relative; border-right: 1px solid #eceef1; height: 62px; flex: none; }
.corner { position: absolute; right: 5px; bottom: 2px; width: 5px; height: 5px; border: solid #8c97ad; border-width: 0 1px 1px 0; }
.big { flex-direction: column; height: 52px; gap: 3px; padding-top: 5px; justify-content: flex-start; }
.big > span:last-child { display: flex; gap: 3px; height: 20px; align-items: center; }
.clip { width: 158px; display: flex; padding-left: 12px; gap: 11px; }
.stack { display: flex; flex-direction: column; gap: 10px; padding-top: 6px; }
.stack button { gap: 4px; }
.row { display: flex; align-items: center; gap: 8px; height: 24px; margin-top: 2px; }
.font { width: 317px; padding-left: 5px; }
.font .low { padding-left: 5px; }
.selects { display: flex; border: 1px solid #dadde3; border-radius: 2px; height: 24px; width: 195px; }
.sel { position: relative; display: block; }
.sel .c { position: absolute; right: 3px; top: 3px; pointer-events: none; }
.face { flex: 1; padding-left: 2px; }
.size { width: 79px; border-left: 1px solid #dadde3; padding-left: 2px; }
.pinyin { width: 18px; display: flex; flex-direction: column; align-items: center; }
.pinyin b { font-size: 9px; line-height: 9px; font-weight: 400; }
.ul { background: #e9ecf1; border-radius: 2px; height: 24px; margin: 0 -3px; padding-left: 3px; gap: 4px; overflow: hidden; }
.ul span { background: #dbdfe6; height: 24px; width: 10px; display: flex; align-items: center; justify-content: center; }
.para { width: 255px; padding-left: 9px; }
.para .low { gap: 9px; }
.pressed { background: #dbe0e7; width: 24px; height: 24px; margin: 0 -4px; border-radius: 2px; }
.sep { width: 1px; height: 18px; background: #dfe2e7; margin: 0 -1px; }
.styles { width: 288px; padding: 2px 5px; }
.gallery { display: flex; height: 50px; width: 277px; border: 1px solid #dfe2e7; border-radius: 2px; overflow: hidden; }
.gallery button { width: 65px; flex-direction: column; justify-content: flex-start; overflow: hidden; padding: 2px 2px 0; }
.gallery .on { outline: 2px solid #dde0e7; outline-offset: -2px; }
.gallery button span { height: 30px; line-height: 30px; align-self: flex-start; color: #000; width: 61px; overflow: hidden; text-align: left; }
.gallery .s0 { font-size: 13px; line-height: 28px; }
.s1, .s2 { font-family: "Liberation Sans", sans-serif; font-weight: 700; font-size: 24px; }
.s2 { font-size: 21px; }
.s3 { font-weight: 700; font-size: 18px; }
.spin { flex: 1; display: flex; flex-direction: column; border-left: 1px solid #eceef1; }
.spin span { flex: 1; display: flex; align-items: center; justify-content: center; border-bottom: 1px solid #eceef1; }
.spin svg, .track svg { width: 6px; height: 8px; fill: #8390ac; stroke: none; }
.spin svg { height: 5px; }
.solo { display: flex; padding: 0 10px; gap: 12px; }
.ailogo { position: relative; display: block; }
.ailogo b { position: absolute; left: 5px; top: 4px; font: italic 700 13px/16px "Liberation Sans", sans-serif; color: #3f8cff; }

.work { flex: 1; min-height: 0; display: flex; overflow: hidden; }
.vruler { width: 16px; flex: none; display: flex; flex-direction: column; color: #4b5570; font-size: 9px; line-height: 12px; }
.vruler b, .ticks b { font-weight: 400; }
.vruler b { writing-mode: vertical-rl; transform: rotate(180deg); display: flex; align-items: center; justify-content: center; width: 16px; }
.stop { width: 6px; height: 6px; margin: 11px 0 0 4px; border: solid #b4bac6; border-width: 0 0 2px 2px; }
.above { display: grid; grid-auto-rows: 23px; margin-top: 32px; height: 104px; }
.below { flex: 1; min-height: 0; overflow: hidden; background: #e8ebf1; border-top: 1px solid #8a9bb0; padding-top: 11px; }
.below > div { display: grid; grid-template-rows: repeat(31, 1fr); height: 721px; }
.canvas { flex: 1; min-width: 0; display: flex; flex-direction: column; padding-left: 8px; align-items: center; overflow: hidden; }
.hruler { position: relative; z-index: 1; width: 889px; height: 16px; padding-left: 18px; flex: none; background: linear-gradient(90deg, transparent 134px, #e8ebf1 134px, #e8ebf1 754px, transparent 754px); color: #4b5570; }
.ticks { display: grid; grid-template-columns: repeat(48, 1fr); width: 858px; height: 16px; font-size: 9px; line-height: 15px; text-align: center; }
.ticks b { background: linear-gradient(#8593ad, #8593ad) left bottom / 1px 10px no-repeat; min-width: 0; }
.ticks b:last-child { background: linear-gradient(#8593ad, #8593ad) left bottom / 1px 10px no-repeat, linear-gradient(#8593ad, #8593ad) right bottom / 1px 10px no-repeat; }
.mark { position: absolute; top: 0; width: 10px; height: 22px; }
.mark.left { left: 130px; }
.mark.right { left: 750px; }
.page { position: relative; width: 889px; flex: 1; margin-top: 31px; background: #fff; box-shadow: 0 2px 14px 2px rgba(60,66,75,.22); }
.pagehead { padding-top: 70px; text-align: center; font: 12px/12px "Liberation Mono", "Noto Sans CJK SC", monospace; color: #777; height: 81px; }
.crops { display: flex; justify-content: space-between; padding: 0 109px; }
.crops i { width: 26px; height: 27px; border-bottom: 1px solid #c4c6c9; }
.tl { border-right: 1px solid #c4c6c9; }
.tr { border-left: 1px solid #c4c6c9; }
.text { padding: 0 134px; font: 300 18px/23px "Liberation Serif", "Noto Sans CJK SC", serif; color: #000; }
.text p { height: 23px; }
.text u { text-decoration-thickness: 1px; text-underline-offset: 2px; }
.picked { display: inline-block; height: 23px; padding-right: 9px; background: #c6c6c6; }
.pastetip { position: absolute; left: 62px; top: 180px; display: flex; gap: 7px; }

.scroll { width: 15px; flex: none; display: flex; flex-direction: column; align-items: center; }
.scroll .top { width: 10px; height: 12px; margin: 4px 0 2px; }
.track { flex: 1; width: 15px; background: #e9eaf1; display: flex; flex-direction: column; align-items: center; padding: 5px 0 8px; gap: 10px; }
.rail { flex: 1; width: 12px; margin-top: -2px; }
.thumb { height: 65%; border-radius: 6px; background: #d3d6de; }
.panel { width: 261px; flex: none; border-left: 1px solid #dfe2ea; padding: 0 13px 0 11px; display: flex; flex-direction: column; }
.panel header { display: flex; justify-content: space-between; height: 39px; align-items: center; color: #4b566b; margin: 0 -6px 0 -3px; padding-bottom: 9px; }
.panel header button { gap: 4px; }
.panel header span { display: flex; gap: 9px; }
.panel .sel { background: #fff; border: 1px solid #d6dae2; border-radius: 2px; }
.current { height: 32px; font-size: 16px; color: #000; padding-left: 6px; flex: none; }
.panel .current .c { right: 8px; top: 6px; width: 8px; }
.acts { display: flex; gap: 10px; margin: 7px 0; }
.acts button { width: 78px; height: 23px; background: #fff; border: 1px solid #d6dae2; border-radius: 1px; color: #4b566b; }
.panel h2 { font-size: 14px; line-height: 20px; margin: 14px 0 6px; color: #4b566b; }
.list { flex: 1; background: #fff; border: 1px solid #dfe2e8; border-radius: 2px; padding: 1px 12px 0 2px; }
.list li { height: 22px; display: flex; justify-content: space-between; padding: 0 6px 0 7px; line-height: 22px; color: #3a4356; }
.list svg { width: 10px; height: 8px; margin-top: 3px; }
.list u { line-height: 14px; color: #000; font-weight: 600; padding-right: 1px; font-size: 11px; }
.list .on { outline: 1px solid #4a8be0; outline-offset: -1px; }
.show { display: flex; align-items: center; gap: 5px; height: 22px; margin-top: 8px; flex: none; color: #4b566b; }
.show label { width: 28px; white-space: nowrap; color: #2b3447; }
.show .sel { flex: 1; height: 22px; padding-left: 3px; }
.show + .show { margin: 9px 0 26px; justify-content: space-between; }
.show .chk { display: flex; align-items: center; gap: 5px; width: auto; }
.chk input { appearance: none; width: 13px; height: 13px; border: 1px solid #222; background: #fff; }
.show a { display: flex; align-items: center; gap: 1px; color: #3f73f0; text-decoration: none; margin-right: 4px; }
.tools { width: 43px; flex: none; border-left: 1px solid #dfe2ea; display: flex; flex-direction: column; align-items: center; gap: 4px; padding: 0 2px 4px 0; }
.grip { width: 20px; height: 4px; border: solid #c5c9d1; border-width: 1px 0; margin: 11px 0 9px; }
.tools button { width: 32px; height: 32px; border-radius: 2px; }
.tools .on { background: #dae0e7; }
.tools .l { width: 20px; height: 20px; }
.hr { width: 38px; height: 1px; background: #d9dce3; margin: 4px 0; }
.end { margin-top: auto; margin-bottom: 0; }

.status { height: 29px; flex: none; border-top: 1px solid #dfe1e5; display: flex; align-items: center; padding-left: 10px; gap: 8px; }
.status > i, .views > i { width: 1px; height: 15px; background: #dfe1e6; }
.status button { gap: 3px; }
.status .over { margin: 0 2px 0 3px; }
.status .near { margin: 0 -5px; }
.status span + span { margin-left: 6px; }
.status .tight + span { margin-left: 4px; }
.status em { font-style: normal; display: flex; align-items: center; gap: 3px; background: #e8f1fb; height: 27px; padding: 0 3px; }
.views { margin-left: auto; display: flex; align-items: center; gap: 10px; padding-right: 36px; }
.views > i { margin: 0 4px; }
.views .on { background: #dae0e7; width: 24px; height: 24px; margin: 0 -4px; border-radius: 2px; }
.views .zoom { gap: 6px; color: #4b566b; }
.views input { appearance: none; width: 165px; height: 1px; background: #55617a; }
.views input::-webkit-slider-thumb { appearance: none; width: 0; height: 0; }

.arrow { position: absolute; z-index: 5; filter: drop-shadow(2px 2px 2px rgba(0,0,0,.5)); }
.up1 { left: 552px; top: 378px; width: 60px; height: 130px; }
.up2 { left: 210px; top: 122px; width: 30px; height: 80px; }
.badge { position: absolute; z-index: 5; width: 24px; height: 24px; border-radius: 12px; border: 3px solid #fff; background: #00f; color: #fff; font-size: 13px; line-height: 18px; text-align: center; box-shadow: 1px 2px 4px rgba(0,0,0,.6); }
.b1 { left: 581px; top: 393px; }
.b2 { left: 240px; top: 127px; }

.net { position: absolute; right: 29px; bottom: 61px; z-index: 6; display: flex; align-items: center; color: #fff; }
.pill { width: 84px; height: 42px; border-radius: 21px 0 0 21px; background: #30343f; margin-right: -24px; padding-left: 10px; box-shadow: 0 1px 4px rgba(0,0,0,.5); }
.pill span { display: flex; align-items: center; height: 21px; width: 46px; }
.pill span + span { border-top: 1px solid #22252d; }
.pill svg { width: 8px; height: 8px; }
.pill b { flex: 1; text-align: right; font-weight: 600; font-size: 11px; }
.pill small { font-size: 9px; color: #a9adb8; margin: 2px 0 0 1px; }
.dial { width: 60px; height: 60px; border-radius: 30px; background: #565b69; border: 1px solid #3b3f4a; display: flex; align-items: center; justify-content: center; position: relative; box-shadow: 0 1px 4px rgba(0,0,0,.4); }
.dial svg { position: absolute; inset: 0; }
.dial b { font-size: 24px; font-weight: 300; line-height: 28px; }
.dial small { font-size: 10px; padding-top: 12px; }

.ime { position: absolute; right: 0; bottom: 1px; z-index: 3; display: flex; align-items: center; height: 26px; padding: 0 2px; background: #fff; border: 1px solid #b9c9e2; width: 159px; }
.sogou { width: 36px; height: 32px; margin: -4px 3px 0 0; }
.ime b { font-size: 16px; color: #0b6fd6; }
.ime .l { flex: 1; min-width: 0; }
.wm { position: absolute; right: 11px; bottom: 8px; z-index: 4; display: flex; opacity: .75; pointer-events: none; }
.wm svg { width: 44px; height: 44px; }
.wm p { font: 700 21px/24px "Noto Sans CJK SC", sans-serif; color: #3f7fc4; display: flex; flex-direction: column; }
.wm span { font: 700 16px/20px "Liberation Sans", sans-serif; color: #55bf6a; }
```
